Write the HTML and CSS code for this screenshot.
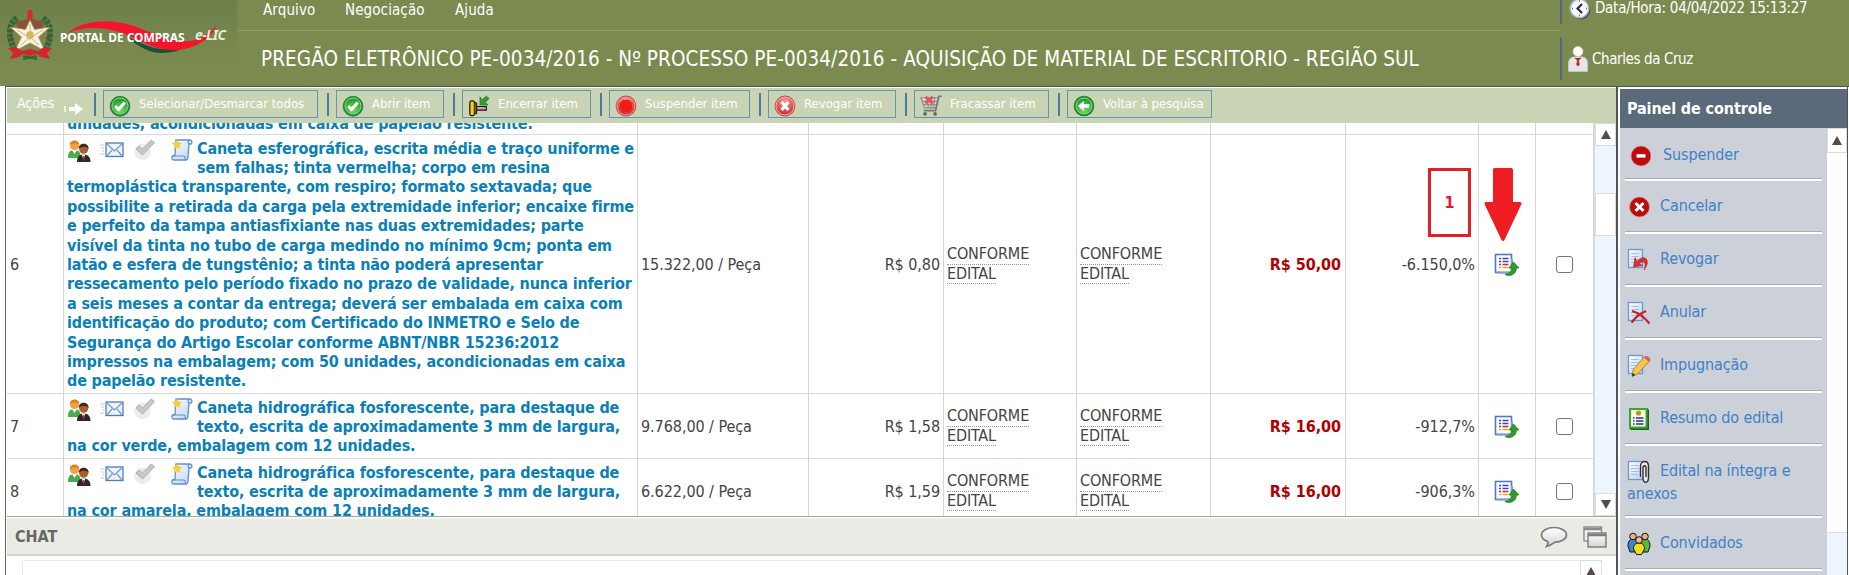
FILE: index.html
```html
<!DOCTYPE html>
<html lang="pt-BR">
<head>
<meta charset="utf-8">
<title>Portal de Compras e-LIC</title>
<link rel="stylesheet" href="styles.css">
</head>
<body>
<svg class="defs" width="0" height="0">
  <defs>
    <radialGradient id="gGreen" cx="50%" cy="75%" r="70%"><stop offset="0" stop-color="#7ddb62"/><stop offset="1" stop-color="#1f9a2c"/></radialGradient>
    <radialGradient id="gRed" cx="50%" cy="20%" r="80%"><stop offset="0" stop-color="#f79a94"/><stop offset="1" stop-color="#cf2a2a"/></radialGradient>
    <linearGradient id="gPaper" x1="0" y1="0" x2="1" y2="1"><stop offset="0" stop-color="#fff"/><stop offset="1" stop-color="#b9d3f5"/></linearGradient>
    <linearGradient id="gGrey" x1="0" y1="0" x2="0" y2="1"><stop offset="0" stop-color="#fff"/><stop offset="1" stop-color="#d4d4d4"/></linearGradient>
    <symbol id="ok" viewBox="0 0 22 22"><circle cx="11" cy="11.5" r="10.4" fill="#6b8f62"/><circle cx="11" cy="11" r="10" fill="#1c8a33"/><circle cx="11" cy="11" r="8" fill="url(#gGreen)" stroke="#8fd98a"/><path d="M6.2 11l3.3 3.6 6.3-7" fill="none" stroke="#fff" stroke-width="3"/></symbol>
    <symbol id="back" viewBox="0 0 22 22"><circle cx="11" cy="11" r="10.3" fill="#1c8a33"/><circle cx="11" cy="11" r="8" fill="url(#gGreen)" stroke="#8fd98a"/><path d="M4.8 11l6-5v3.3h5.6v3.4h-5.6V16z" fill="#fff"/></symbol>
    <symbol id="stop" viewBox="0 0 22 22"><circle cx="11" cy="11" r="10.4" fill="#b84848"/><circle cx="11" cy="11" r="9" fill="url(#gRed)" stroke="#f0a0a0"/><path d="M8 5h6l3.2 3.2v5.6L14 17H8l-3.200-3.200V8.200z" fill="#f21c14"/></symbol>
    <symbol id="revoke" viewBox="0 0 22 22"><circle cx="11" cy="11" r="10.4" fill="#b84848"/><circle cx="11" cy="11" r="9" fill="url(#gRed)" stroke="#f6b4b4"/><path d="M7.500 7l7 8M14.500 7l-7 8" stroke="#fff" stroke-width="3.200"/></symbol>
    <symbol id="gavel" viewBox="0 0 22 24"><path d="M6 12.500h13v4H6z" fill="#e0a18a" stroke="#111" stroke-width="1.200"/><rect x="1" y="6.500" width="5" height="16" rx="2" fill="#f2cf1d" stroke="#111" stroke-width="1.300"/><path d="M6 8.500h2.500v12H6" fill="#7a5a1a" stroke="#111"/><path d="M12 2v9h9l-3-2.800 4-4.500-3-2.700-4.300 4z" fill="#2f9c34" stroke="#1d7423" stroke-width=".6"/></symbol>
    <symbol id="cart" viewBox="0 0 24 24"><path d="M1 3h19l-2.500 11H5zM3 7h16M4 10.500h14.500M8 3l1 11M12 3v11M16 3l-1 11" fill="#d9dad6" stroke="#8d8d8d" stroke-width="1.300"/><path d="M23.500 1.500h-3L17 17H4" fill="none" stroke="#777" stroke-width="1.800"/><circle cx="5.500" cy="20.500" r="2" fill="#666"/><circle cx="16.500" cy="20.500" r="2" fill="#666"/><path d="M6 2l8 7M14 2L6 9" stroke="#e2555a" stroke-width="3.400"/></symbol>
    <symbol id="people" viewBox="0 0 24 24"><path d="M1 19c0-6 2-8 6.500-8s6 2 6 8z" fill="#4bab4f"/><path d="M5 11h5l-2.500 4z" fill="#fff"/><circle cx="7.500" cy="6.500" r="4.600" fill="#f0a045"/><path d="M2.800 6c0-6 9.500-6 9.500 0-2-2-7-2-9.500 0z" fill="#d98320"/><path d="M10 23c0-5 2-7.500 6.500-7.500S23.500 18 23.500 23z" fill="#2d2727"/><path d="M14.500 15.500h4l-2 4.500z" fill="#f2f2f2"/><path d="M16 17l1 0 .7 4-1.200 1z" fill="#c22"/><circle cx="16.700" cy="10.300" r="4.500" fill="#a9602c"/><path d="M11.800 10c-.5-7 10-7 10 0-2.500-3-7-3-10 0z" fill="#43271a"/></symbol>
    <symbol id="mail" viewBox="0 0 24 16"><path d="M0 3h4M1 6h3M2 9h2M0 12h4" stroke="#b9cce8"/><rect x="6" y="1" width="17" height="13.500" fill="#eef4fc" stroke="#4e7cc0" stroke-width="1.300"/><path d="M7 2l7.500 7L22 2M7 14l5-6M22 14l-5-6" fill="none" stroke="#7298d0" stroke-width="1.200"/></symbol>
    <symbol id="check" viewBox="0 0 22 22"><circle cx="9.500" cy="13" r="8.300" fill="#ececec"/><path d="M3 10l3.200-3L9.500 10l8.700-9L21.500 3.700 9.500 16z" fill="#c8c8c8" stroke="#aeaeae"/></symbol>
    <symbol id="scroll" viewBox="0 0 22 22"><path d="M5 1.500h13.500c3 0 3 4 1 4H18l-1 13c0 1.500-1 3-2 3H3c-3 0-2.500-4.500 0-4.500h1z" fill="url(#gPaper)" stroke="#5f8fd6" stroke-width="1.300"/><path d="M18 5.500c-1.500-1-1-3.500 1-4M2 17.500h11c1.500 0 1 4 2 4" fill="none" stroke="#5f8fd6" stroke-width="1.200"/><path d="M6 1l1.700 3 3.600.5-2.700 2.500.7 3.600L6 9l-3.200 1.600.7-3.600L.8 4.500 4.300 4z" fill="#f7cd3a"/></symbol>
    <symbol id="detail" viewBox="0 0 26 24"><rect x="1.500" y="1.500" width="16" height="18" fill="#fff" stroke="#5078c8" stroke-width="1.600"/><path d="M3 19.500h15V6" fill="none" stroke="#7f9fd6" stroke-width="2"/><path d="M5 5.500h2M8.500 5.500h6M5 8.500h2M8.500 8.500h6" stroke="#3340d8" stroke-width="1.600"/><path d="M5 11.500h2M8.500 11.500h6" stroke="#d22" stroke-width="1.600"/><path d="M5 14.500h2M8.500 14.500h6" stroke="#e8a51c" stroke-width="1.600"/><path d="M11 21.500c5 2.500 11.500 0 11.300-6.500H25L19.500 9 15 15h3c0 3.500-3 5.500-7 6.500z" fill="#2f9d2b" stroke="#23801f" stroke-width=".8"/></symbol>
    <symbol id="page" viewBox="0 0 24 24"><rect x="1.500" y="1.500" width="14" height="18" fill="url(#gPaper)" stroke="#6a97d8" stroke-width="1.300"/><path d="M4 5.500h8M4 8.500h8M4 11.500h8M4 14.500h7" stroke="#a8bedd"/></symbol>
  </defs>
</svg>

<header class="top">
  <div class="brand">
    <svg class="emblem" viewBox="0 0 46 52">
      <path d="M10 8C2 13 0 26 7 38M36 8c8 5 10 18 3 30" fill="none" stroke="#2c6b37" stroke-width="6" stroke-dasharray="3.500 1"/>
      <path d="M4 19l3 2M3 28l4 1M41 17l-2 2M43 27l-4 1" stroke="#b02a2a" stroke-width="2"/>
      <path d="M8 12l10-2 5-4 5 4 10 2-4 8H12z" fill="#8a5236"/>
      <path d="M12 20h22l-2 14H14z" fill="#a5793f"/>
      <rect x="20.500" y="0" width="5" height="9" rx="2" fill="#d22b2b"/>
      <path d="M23 10l4.500 9.500L43 17l-11.500 10L38 41l-15-8-15 8 6.500-14L3 17l15.500 2.500z" fill="#f7f1e2" stroke="#a98b4b" stroke-width=".7"/>
      <path d="M23 14v16M10 20l13 8 13-8M14 35l9-8 9 8" fill="none" stroke="#c9a54a" stroke-width=".8"/>
      <circle cx="23" cy="25" r="3.800" fill="#d8b55c"/>
      <path d="M1 38l8-1 6 4 8-2 8 2 6-4 8 1-5 5 3 6-9-2-4-3-7 2-7-2-4 3-9 2 3-6z" fill="#d2262c"/>
      <path d="M16 46l14 3M30 46l-14 3" stroke="#2c6b37" stroke-width="2"/>
    </svg>
    <svg class="wave" viewBox="0 0 160 37">
      <path d="M68 18c8 8 20 16 34 16 12 0 22-4 30-10-8 4-18 6-28 6-14 0-26-8-36-12z" fill="#1d5135"/>
      <path d="M8 14C22 1 50-1 74 7c20 7 36 17 56 15 10-1 20-8 27-16-5 14-24 26-47 25-20-1-32-12-48-17C44 8 24 7 8 14z" fill="#f5152b"/>
    </svg>
    <span class="brand-name">PORTAL DE COMPRAS</span><span class="brand-sub">e-LIC</span>
  </div>
  <div class="top-mid">
    <nav class="menu"><a class="m1">Arquivo</a><a class="m2">Negociação</a><a class="m3">Ajuda</a></nav>
    <h1 class="title"><span>PREGÃO ELETRÔNICO PE-0034/2016 - Nº PROCESSO PE-0034/2016 - AQUISIÇÃO DE MATERIAL DE ESCRITORIO - REGIÃO SUL</span></h1>
  </div>
  <div class="top-right">
    <div class="info clock">
      <svg width="22" height="22" viewBox="0 0 22 22"><circle cx="12" cy="12" r="9.500" fill="#46536a"/><circle cx="10.500" cy="10.500" r="9.300" fill="#f5f7fa" stroke="#a9b4c8" stroke-width="1.500"/><path d="M13 6l-4.500 4.500 4.500 4.500" fill="none" stroke="#23283a" stroke-width="2"/><path d="M10 3h1M3 10.500h1M17 10.500h1M10 17.500h1" stroke="#d33" stroke-width="1.500"/></svg>
      <span>Data/Hora: 04/04/2022 15:13:27</span>
    </div>
    <div class="info user">
      <svg width="20" height="26" viewBox="0 0 20 26"><path d="M.5 25.500V17c0-4 3-6 5.500-6h8c3 0 5.500 2 5.500 6v8.500z" fill="#e6e6e6" stroke="#c4c4c4"/><path d="M6.500 12h7L10.800 14.500l1 4-1.800 2-1.800-2 1-4z" fill="#c32a2a"/><circle cx="10" cy="5.500" r="5" fill="#fff" stroke="#cfcfcf" stroke-width=".6"/></svg>
      <span>Charles da Cruz</span>
    </div>
  </div>
</header>

<div class="main">
  <section class="work">
    <div class="toolbar">
      <span class="acoes">Ações</span>
      <svg class="goto" width="20" height="14" viewBox="0 0 20 14"><path d="M1 4v6" stroke="#fff" stroke-width="1.500"/><path d="M5 5h6V1l8 6-8 6V9H5z" fill="#fff"/></svg>
      <i class="sep"></i><button class="btn b1"><svg><use href="#ok"/></svg><span>Selecionar/Desmarcar todos</span></button>
      <i class="sep"></i><button class="btn b2"><svg><use href="#ok"/></svg><span>Abrir item</span></button>
      <i class="sep"></i><button class="btn b3"><svg><use href="#gavel"/></svg><span>Encerrar item</span></button>
      <i class="sep"></i><button class="btn b4"><svg><use href="#stop"/></svg><span>Suspender item</span></button>
      <i class="sep"></i><button class="btn b5"><svg><use href="#revoke"/></svg><span>Revogar item</span></button>
      <i class="sep"></i><button class="btn b6"><svg><use href="#cart"/></svg><span>Fracassar item</span></button>
      <i class="sep"></i><button class="btn b7"><svg><use href="#back"/></svg><span>Voltar à pesquisa</span></button>
    </div>
    <div class="grid-wrap">
      <div class="grid">
        <div class="row r5">
          <div></div><div class="desc">unidades, acondicionadas em caixa de papelão resistente.</div><div></div><div></div><div></div><div></div><div></div><div></div><div></div><div></div>
        </div>
        <div class="row r6">
          <div>6</div>
          <div class="desc"><span class="icons"><svg class="i-people"><use href="#people"/></svg><svg class="i-mail"><use href="#mail"/></svg><svg class="i-check"><use href="#check"/></svg><svg class="i-scroll"><use href="#scroll"/></svg></span>Caneta esferográfica, escrita média e traço uniforme e<br>sem falhas; tinta vermelha; corpo em resina<br>termoplástica transparente, com respiro; formato sextavada; que<br>possibilite a retirada da carga pela extremidade inferior; encaixe firme<br>e perfeito da tampa antiasfixiante nas duas extremidades; parte<br>visível da tinta no tubo de carga medindo no mínimo 9cm; ponta em<br>latão e esfera de tungstênio; a tinta não poderá apresentar<br>ressecamento pelo período fixado no prazo de validade, nunca inferior<br>a seis meses a contar da entrega; deverá ser embalada em caixa com<br>identificação do produto; com Certificado do INMETRO e Selo de<br>Segurança do Artigo Escolar conforme ABNT/NBR 15236:2012<br>impressos na embalagem; com 50 unidades, acondicionadas em caixa<br>de papelão resistente.</div>
          <div>15.322,00 / Peça</div><div class="num">R$ 0,80</div>
          <div><span class="spec">CONFORME</span><span class="spec">EDITAL</span></div><div><span class="spec">CONFORME</span><span class="spec">EDITAL</span></div>
          <div class="num price">R$ 50,00</div><div class="num">-6.150,0%</div>
          <div class="mid"><svg class="i-detail"><use href="#detail"/></svg></div><div class="mid"><i class="box"></i></div>
        </div>
        <div class="row r7">
          <div>7</div>
          <div class="desc"><span class="icons"><svg class="i-people"><use href="#people"/></svg><svg class="i-mail"><use href="#mail"/></svg><svg class="i-check"><use href="#check"/></svg><svg class="i-scroll"><use href="#scroll"/></svg></span>Caneta hidrográfica fosforescente, para destaque de<br>texto, escrita de aproximadamente 3 mm de largura,<br>na cor verde, embalagem com 12 unidades.</div>
          <div>9.768,00 / Peça</div><div class="num">R$ 1,58</div>
          <div><span class="spec">CONFORME</span><span class="spec">EDITAL</span></div><div><span class="spec">CONFORME</span><span class="spec">EDITAL</span></div>
          <div class="num price">R$ 16,00</div><div class="num">-912,7%</div>
          <div class="mid"><svg class="i-detail"><use href="#detail"/></svg></div><div class="mid"><i class="box"></i></div>
        </div>
        <div class="row r8">
          <div>8</div>
          <div class="desc"><span class="icons"><svg class="i-people"><use href="#people"/></svg><svg class="i-mail"><use href="#mail"/></svg><svg class="i-check"><use href="#check"/></svg><svg class="i-scroll"><use href="#scroll"/></svg></span>Caneta hidrográfica fosforescente, para destaque de<br>texto, escrita de aproximadamente 3 mm de largura,<br>na cor amarela, embalagem com 12 unidades.</div>
          <div>6.622,00 / Peça</div><div class="num">R$ 1,59</div>
          <div><span class="spec">CONFORME</span><span class="spec">EDITAL</span></div><div><span class="spec">CONFORME</span><span class="spec">EDITAL</span></div>
          <div class="num price">R$ 16,00</div><div class="num">-906,3%</div>
          <div class="mid"><svg class="i-detail"><use href="#detail"/></svg></div><div class="mid"><i class="box"></i></div>
        </div>
      </div>
      <div class="scrollbar"><b class="up"></b><i class="thumb"></i><b class="down"></b></div>
    </div>
    <div class="chat-head">
      <span>CHAT</span>
      <svg class="bubble" width="28" height="22" viewBox="0 0 28 22"><path d="M14 1.500C7 1.500 1.500 4.800 1.500 9c0 3 2.500 5.200 6 6.400 1 .6.500 2.600-1 5.100 4-1 6.500-3 8-4.200C21.500 16 26.500 13 26.500 9c0-4.200-5.500-7.500-12.500-7.500z" fill="url(#gGrey)" stroke="#7c7c7c" stroke-width="1.700"/></svg>
      <svg width="24" height="22" viewBox="0 0 24 22"><rect x="1" y="1" width="17.500" height="14" fill="#f4f4f2" stroke="#8a8a8a" stroke-width="1.400"/><path d="M1 3h17.500" stroke="#8a8a8a" stroke-width="2.500"/><rect x="5" y="7" width="18" height="14" fill="url(#gGrey)" stroke="#7c7c7c" stroke-width="1.400"/><path d="M5 9h18" stroke="#7c7c7c" stroke-width="2.500"/></svg>
    </div>
    <div class="chat-body"><div class="chat-list"></div><div class="chat-scroll"><b class="up"></b></div></div>
  </section>

  <aside class="panel">
    <h2><span>Painel de controle</span></h2>
    <div class="panel-body">
      <ul>
        <li class="p1"><svg viewBox="0 0 24 24"><circle cx="14" cy="12" r="10" fill="#bb0d0d" stroke="#dc8a8a" stroke-width=".8"/><rect x="9.500" y="10.200" width="9" height="3.400" fill="#fff"/></svg><span>Suspender</span></li>
        <li><svg viewBox="0 0 24 24"><circle cx="12.500" cy="12" r="10" fill="#bb0d0d" stroke="#dc8a8a" stroke-width=".8"/><path d="M8.500 8l8 8M16.500 8l-8 8" stroke="#fff" stroke-width="3"/></svg><span>Cancelar</span></li>
        <li><svg viewBox="0 0 24 24"><use href="#page"/><path d="M17 22c8-10 0-17-7-8.500l-2-4L6.500 19l9-1.500-3-1.800c3-3.500 8-3 4.500 6.300z" fill="#d8302f" stroke="#b71d1d" stroke-width=".6"/></svg><span>Revogar</span></li>
        <li><svg viewBox="0 0 24 24"><use href="#page"/><path d="M5 10c7 2 13 7 17.500 12.500M19 10C14 12 8 17 4.500 21.500" fill="none" stroke="#c9201f" stroke-width="2.300"/></svg><span>Anular</span></li>
        <li><svg viewBox="0 0 24 24"><use href="#page"/><path d="M17 3l5 4.500L10.500 20 5 22.500 6 16z" fill="#f3c64e" stroke="#9c7526" stroke-width=".8"/><path d="M17 3c2.500-3 8.500 2 5.500 5z" fill="#e8545b"/><path d="M5 22.500l.7-3.500 2.600 2z" fill="#222"/></svg><span>Impugnação</span></li>
        <li><svg viewBox="0 0 24 24"><path d="M2 1h18l2 2v20H4l-2-2z" fill="#1d641b"/><rect x="3" y="2" width="16.500" height="18.500" fill="#fafbe0" stroke="#3aa52e" stroke-width="2"/><circle cx="11.500" cy="6" r="2.600" fill="#b79a1c"/><path d="M6 11h1.500M9 11h7.500M6 14h1.500M9 14h7.500M6 17h1.500M9 17h7.500" stroke="#28289c" stroke-width="1.500"/></svg><span>Resumo do edital</span></li>
        <li class="tall"><svg viewBox="0 0 24 24"><use href="#page"/><path d="M13.500 17V6c0-6 8-6 8 0v11c0 7-5.500 7-5.500 1V8c0-3 3-3 3 0v9" fill="#e9e9e9" stroke="#303030" stroke-width="1.400"/></svg><span>Edital na íntegra e</span><em>anexos</em></li>
        <li class="p8"><svg viewBox="0 0 24 24"><g stroke="#151515" stroke-width="1"><path d="M1 14c0-5 2-7 5-7s5 2 5 7l-3 6H3z" fill="#3b82d8"/><path d="M13 14c0-5 2-7 5-7s5 2 5 7l-2 6h-5z" fill="#58b93a"/><circle cx="6" cy="4.500" r="3.300" fill="#eab08c"/><circle cx="18" cy="4.500" r="3.300" fill="#eab08c"/><path d="M6.500 17c0-4 2-6 5.500-6s5.500 2 5.500 6l-3 5.500h-5z" fill="#f2dc1c"/><circle cx="12" cy="8" r="3.300" fill="#f0bd98"/></g></svg><span>Convidados</span></li>
      </ul>
      <div class="panel-scroll"><b class="up"></b><i></i></div>
    </div>
  </aside>
</div>

<div class="callout">1</div>
<svg class="arrow" width="38" height="75" viewBox="0 0 38 75"><path d="M10 1h17q2 0 2 2v32h7q2 0 1.500 2L20.500 73q-1.500 2-3 0L.5 37Q0 35 2 35h7V3q0-2 1-2z" fill="#ee1c23"/></svg>
</body>
</html>
```
FILE: styles.css
```css
* { box-sizing: border-box; }
body {
  margin: 0;
  width: 1849px;
  height: 575px;
  overflow: hidden;
  position: relative;
  background: #fff;
  color: #444;
  font: 16px/19.4px "DejaVu Sans Condensed", "DejaVu Sans", sans-serif;
  font-stretch: condensed;
}
.defs { position: absolute; }

/* header */
.top { display: flex; height: 86px; background: #7b8b4f; color: #fff; }
.brand { position: relative; width: 237px; height: 86px; background: linear-gradient(#6f7f4b, #7b8b4f 75%); }
.emblem { position: absolute; left: 7px; top: 10px; width: 46px; height: 52px; }
.wave { position: absolute; left: 60px; top: 19px; width: 160px; height: 37px; }
.brand-name { position: absolute; left: 60px; top: 28px; font: bold 12px/20px "Noto Sans", sans-serif; white-space: nowrap; letter-spacing: -.1px; }
.brand-sub { position: absolute; left: 195px; top: 25px; font: italic bold 14px/20px "Noto Sans", sans-serif; color: #e8ebdd; letter-spacing: -.6px; }
.top-mid { width: 1323px; }
.menu { display: flex; height: 31px; padding-left: 26px; border-bottom: 1px solid #90a35c; font-size: 15px; line-height: 20px; letter-spacing: .1px; }
.menu a { width: 82px; }
.menu .m2 { width: 110px; }
.title { margin: 0; padding: 16px 0 0 24px; font-size: 20.500px; line-height: 25px; letter-spacing: .07px; font-weight: normal; white-space: nowrap; }
.top-right { display: flex; flex-direction: column; gap: 13px; }
.info { display: flex; align-items: center; border-left: 2px solid #5a6682; font-size: 15px; white-space: nowrap; letter-spacing: -.27px; }
.clock { height: 24px; padding: 0 0 6px 7px; gap: 4px; }
.user { height: 43px; padding-left: 6px; gap: 4px; letter-spacing: -.4px; }
.user span { padding-top: 2px; }

/* frame */
.main { display: flex; height: 489px; border-top: 1px solid #50535a; margin-left: 5px; }
.work { width: 1611px; border-left: 1px solid #666; padding: 1px 0 0 1px; }
.toolbar { display: flex; align-items: center; height: 35px; background: #c9d4b5; color: #fff; font-size: 13px; padding: 0 0 3px 10px; }
.acoes { width: 47px; font-size: 14px; }
.goto { margin: 9px 10px 0 0; }
.sep { width: 2px; height: 23px; background: #4d79a0; margin-right: 7px; }
.btn { display: flex; align-items: center; gap: 8px; height: 28px; padding: 0 0 0 5px; margin: 0 9px 0 0; border: 1px solid #6795ae; background: none; color: #fff; font: inherit; white-space: nowrap; }
.btn svg { width: 22px; height: 22px; margin-top: 4px; flex: none; }
.b1 { width: 215px; }
.b2 { width: 108px; }
.b3 { width: 129px; }
.b4 { width: 141px; }
.b5 { width: 128px; }
.b6 { width: 135px; }
.b7 { width: 145px; }

/* item grid */
.grid-wrap { display: flex; height: 394px; overflow: hidden; border-bottom: 1px solid #a9aba5; }
.grid { width: 1587px; }
.row { display: grid; grid-template-columns: 57px 574px 171px 135px 133px 134px 135px 133px 57px 58px; border-bottom: 1px solid #d9d9d9; }
.row > div { display: flex; flex-direction: column; justify-content: center; padding: 1px 3px 0; border-right: 1px solid #d5d5d5; white-space: nowrap; letter-spacing: -.06px; }
.row > .desc { display: block; padding: 3.500px 0 0 3px; color: #0a7fb8; font-weight: bold; letter-spacing: -.16px; }
.row > .num { align-items: flex-end; }
.row > .price { color: #b00000; font-weight: bold; padding-right: 4px; }
.row > .mid { align-items: center; }
.r5 { height: 12px; }
.r5 > .desc { padding-top: 0; line-height: 1px; }
.r6 { height: 259px; }
.r7, .r8 { height: 65px; }
.spec { align-self: flex-start; border-bottom: 1px dotted #999; line-height: 18.400px; letter-spacing: -.15px; }
.icons { float: left; display: flex; width: 130px; height: 38px; }
.i-people { width: 24px; height: 24px; }
.i-mail { width: 24px; height: 16px; margin: 3px 0 0 9px; }
.i-check { width: 22px; height: 22px; margin-left: 9px; }
.i-scroll { width: 22px; height: 23px; margin-left: 16px; margin-top: -1px; }
.i-detail { width: 26px; height: 24px; }
.box { width: 17px; height: 17px; border: 1.500px solid #767676; border-radius: 3px; }

/* scrollbars */
.scrollbar { width: 22px; height: 393px; display: flex; flex-direction: column; background: #edf6fe; border-left: 1px solid #dcdcdc; }
.up, .down { height: 23px; background: #fff; border: 1px solid #dcdcdc; display: flex; align-items: center; justify-content: center; flex: none; }
.up::after { content: ""; border: 5px solid transparent; border-top: 0; border-bottom: 9px solid #574b47; }
.down::after { content: ""; border: 5px solid transparent; border-bottom: 0; border-top: 9px solid #574b47; }
.thumb { height: 43px; margin-top: 47px; background: #fff; border: 1px solid #dcdcdc; }
.down { margin-top: auto; }

/* chat */
.chat-head { display: flex; align-items: center; height: 39px; padding: 0 9px 0 8px; background: #ebebe5; border-top: 2px solid #f6f6f2; border-bottom: 2px solid #d3d4cf; color: #666; font-weight: bold; }
.bubble { margin: 0 15px 0 auto; }
.chat-body { display: flex; height: 24px; padding: 4px 0 0 15px; }
.chat-list { width: 1558px; border: 1px solid #ececec; border-right: 0; border-width: 1px 0 0 1px; }
.chat-scroll { width: 22px; }

/* control panel */
.panel { width: 232px; border-left: 2px solid #50535a; border-right: 1px solid #50535a; padding: 2px 0 0 2px; }
.panel h2 { margin: 0; height: 39px; padding: 0 7px; background: #5a6a7a; color: #fff; font-size: 16px; line-height: 39px; letter-spacing: -.12px; }
.panel-body { display: flex; height: 447px; background: #ccd1d9; }
.panel ul { width: 209px; margin: 0; padding: 0 5px; list-style: none; color: #3f80c6; letter-spacing: -.12px; }
.panel li { height: 53px; padding: 13px 0 0 2px; border-bottom: 2px solid #fff; box-shadow: inset 0 -1px #a9adb0; white-space: nowrap; }
.panel li svg { width: 24px; height: 24px; margin-right: 9px; vertical-align: middle; }
.panel li span { line-height: 24px; }
.panel .p1 { padding-top: 15px; }
.panel .p1 svg { margin-right: 12px; }
.panel .tall { height: 72px; }
.panel em { display: block; font-style: normal; }
.panel-scroll { width: 20px; background: #edf6fe; }
.panel-scroll .up { height: 25px; }
.panel-scroll i { display: block; height: 380px; background: #fff; border-bottom: 1px solid #dcdcdc; }

/* annotation over the grid */
.callout { position: absolute; left: 1428px; top: 168px; width: 43px; height: 69px; border: 3px solid #e01f27; color: #e01f27; font-weight: bold; line-height: 63px; text-align: center; }
.arrow { position: absolute; left: 1484px; top: 167px; }
```
